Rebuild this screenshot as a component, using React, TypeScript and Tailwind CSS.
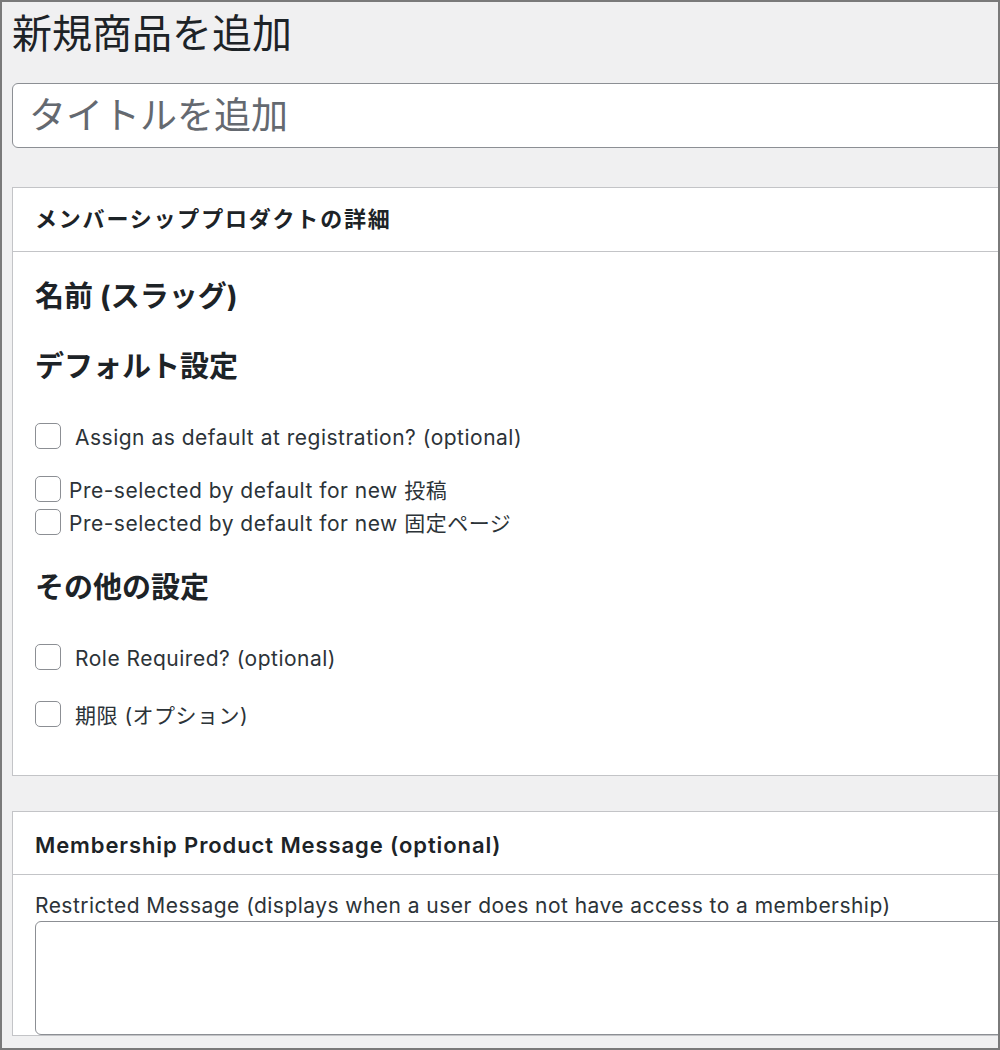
import { useState } from "react";

const font = "font-['Inter','Noto_Sans_CJK_JP',sans-serif]";

function Check({ label, gap = "ml-[14px]", className = "" }: { label: string; gap?: string; className?: string }) {
  const [on, setOn] = useState(false);
  return (
    <label className={`flex h-[32px] items-center ${className}`}>
      <input
        type="checkbox"
        checked={on}
        onChange={(e) => setOn(e.target.checked)}
        className="h-[26px] w-[26px] shrink-0 appearance-none rounded-[5px] border-[1.5px] border-[#8c8f94] bg-white checked:bg-[#2271b1]"
      />
      <span className={`${gap} pt-[3px] text-[21px] tracking-[0.5px] text-[#2c3338]`}>{label}</span>
    </label>
  );
}

export default function App() {
  const [title, setTitle] = useState("");
  const [msg, setMsg] = useState("");

  return (
    <div className={`h-[1050px] w-[1000px] overflow-hidden border-2 border-[#7a7a7a] bg-[#f0f0f1] pl-[10px] pt-[8px] ${font}`}>
      <h1 className="text-[40px] font-normal leading-[47px] text-[#1d2327]">新規商品を追加</h1>

      <input
        value={title}
        onChange={(e) => setTitle(e.target.value)}
        placeholder="タイトルを追加"
        className="mt-[26px] block h-[65px] w-[1010px] rounded-[6px] border border-[#8c8f94] bg-white pl-[16px] text-[37px] text-[#1d2327] outline-none placeholder:text-[#646970]"
      />

      {/* Membership product details */}
      <div className="mt-[39px] w-[1010px] border border-[#c3c4c7] bg-white">
        <div className="flex h-[64px] items-center border-b border-[#c3c4c7] pl-[22px]">
          <h2 className="text-[22px] font-bold tracking-[1.8px] text-[#1d2327]">メンバーシッププロダクトの詳細</h2>
        </div>
        <div className="pb-[45px] pl-[22px]">
          <h3 className="mt-[27px] text-[29px] font-bold leading-[36px] text-[#1d2327]">名前 (スラッグ)</h3>
          <h3 className="mt-[34px] text-[29px] font-bold leading-[36px] text-[#1d2327]">デフォルト設定</h3>
          <Check label="Assign as default at registration? (optional)" className="mt-[35px]" />
          <Check label="Pre-selected by default for new 投稿" gap="ml-[8px]" className="mt-[21px]" />
          <Check label="Pre-selected by default for new 固定ページ" gap="ml-[8px]" className="mt-[1px]" />
          <h3 className="mt-[32px] text-[29px] font-bold leading-[36px] text-[#1d2327]">その他の設定</h3>
          <Check label="Role Required? (optional)" className="mt-[35px]" />
          <Check label="期限 (オプション)" className="mt-[25px]" />
        </div>
      </div>

      {/* Product message */}
      <div className="mt-[35px] w-[1010px] border border-[#c3c4c7] bg-white">
        <div className="flex h-[63px] items-center border-b border-[#c3c4c7] pl-[22px] pt-[4px]">
          <h2 className="text-[22px] font-semibold tracking-[0.9px] text-[#1d2327]">Membership Product Message (optional)</h2>
        </div>
        <div className="pl-[22px]">
          <label className="mt-[18px] block text-[21px] leading-[26px] tracking-[0.45px] text-[#2c3338]">
            Restricted Message (displays when a user does not have access to a membership)
          </label>
          <textarea
            value={msg}
            onChange={(e) => setMsg(e.target.value)}
            className="mt-[2px] block h-[114px] w-[1000px] resize-none rounded-[6px] border border-[#8c8f94] bg-white outline-none"
          />
        </div>
      </div>
    </div>
  );
}
